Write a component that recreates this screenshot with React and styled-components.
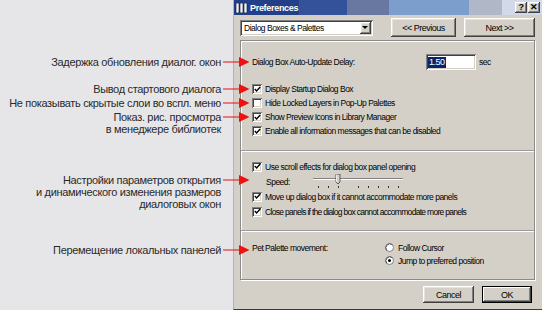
import React from "react";
import styled, { createGlobalStyle } from "styled-components";

const GlobalStyle = createGlobalStyle`
  html, body { margin: 0; padding: 0; }
  body { width: 542px; height: 310px; overflow: hidden; background: #e6e6e8; }
`;

const raised = `
  box-shadow: inset -1px -1px #404040, inset 1px 1px #ffffff,
    inset -2px -2px #808080, inset 2px 2px #e4e2dc;
`;
const sunken = `
  box-shadow: inset 1px 1px #808080, inset -1px -1px #ffffff,
    inset 2px 2px #404040, inset -2px -2px #d4d0c8;
`;

const Page = styled.div`
  display: flex;
  width: 542px;
  height: 310px;
  background: #e6e6e8;
  font-family: "Liberation Sans", Arial, sans-serif;
`;

const Notes = styled.div`
  position: relative;
  z-index: 1;
  flex: none;
  width: 250px;
  display: flex;
  flex-direction: column;
`;

const Note = styled.div`
  display: flex;
  align-items: flex-start;
  margin-top: ${(p) => p.$top}px;
`;

const NoteText = styled.div`
  width: 221px;
  text-align: right;
  font-size: 11px;
  line-height: 12px;
  color: #2a2a2a;
  letter-spacing: -0.33px;
  white-space: nowrap;
`;

const Arrow = () => (
  <svg width="29" height="12" viewBox="0 0 29 12">
    <line x1="2" y1="6" x2="20" y2="6" stroke="#e81010" strokeWidth="1" />
    <polygon points="18,1 28.5,6 18,11" fill="#ee1111" />
  </svg>
);

const Dialog = styled.div`
  margin-left: -17px;
  flex: none;
  width: 309px;
  height: 310px;
  box-sizing: border-box;
  border-left: 1px solid #b4b4b4;
  border-bottom: 1px solid #3a3a3a;
  background: #d4d0c8;
  display: flex;
  flex-direction: column;
  font-size: 8.5px;
  letter-spacing: -0.5px;
  color: #000;
`;

const TitleBar = styled.div`
  height: 15px;
  display: flex;
  align-items: center;
  padding: 0 2px 0 1px;
  background: linear-gradient(
    to right,
    #223f88 0,
    #223f88 65px,
    #33529a 65px,
    #33529a 113px,
    #6878a0 113px,
    #6878a0 155px,
    #7c9ecc 155px,
    #7c9ecc 235px,
    #b0b7c6 235px,
    #b0b7c6 268px,
    #d2daea 268px
  );
`;

const Title = styled.span`
  margin-left: 2px;
  flex: 1;
  color: #fff;
  font-weight: bold;
  font-size: 9px;
  letter-spacing: -0.3px;
`;

const CapButton = styled.div`
  width: 12px;
  height: 11px;
  background: #d4d0c8;
  ${raised}
  display: flex;
  align-items: center;
  justify-content: center;
  font-weight: bold;
  font-size: 9px;
  line-height: 1;
  color: #000;
  margin-left: ${(p) => (p.$gap ? 1 : 0)}px;
`;

const AppIcon = () => (
  <svg width="13" height="12" viewBox="0 0 13 12">
    <rect x="1" y="1" width="3" height="10" rx="1" fill="#f0f0f0" stroke="#111a40" strokeWidth="0.6" />
    <rect x="5" y="1" width="3" height="10" rx="1" fill="#f0f0f0" stroke="#111a40" strokeWidth="0.6" />
    <rect x="9" y="1" width="3" height="10" rx="1" fill="#f0f0f0" stroke="#111a40" strokeWidth="0.6" />
  </svg>
);

const Body = styled.div`
  flex: 1;
  display: flex;
  flex-direction: column;
  padding: 3px 7px 0 6px;
`;

const TopRow = styled.div`
  display: flex;
  align-items: center;
  height: 19px;
`;

const Select = styled.div`
  width: 133px;
  height: 16px;
  box-sizing: border-box;
  background: #fff;
  ${sunken}
  display: flex;
  align-items: center;
  justify-content: space-between;
  padding: 2px 2px 2px 4px;
  margin-right: 18px;
`;

const SelectArrow = styled.div`
  width: 11px;
  height: 12px;
  background: #d4d0c8;
  ${raised}
  display: flex;
  align-items: center;
  justify-content: center;
  &::after {
    content: "";
    border-left: 3px solid transparent;
    border-right: 3px solid transparent;
    border-top: 3px solid #000;
  }
`;

const Button = styled.div`
  width: ${(p) => p.$w}px;
  height: ${(p) => p.$h || 19}px;
  margin-left: ${(p) => p.$gap || 0}px;
  box-sizing: border-box;
  background: #d4d0c8;
  ${raised}
  ${(p) =>
    p.$default &&
    `box-shadow: inset 0 0 0 1px #000, inset -2px -2px #404040, inset 2px 2px #ffffff, inset -3px -3px #808080;`}
  display: flex;
  align-items: center;
  justify-content: center;
  font-size: 9px;
`;

const Panel = styled.div`
  margin-top: 3px;
  height: 240px;
  box-sizing: border-box;
  border: 1px solid #8a8a8a;
  box-shadow: 1px 1px 0 #ffffff, inset 1px 1px 0 #ffffff;
  display: flex;
  flex-direction: column;
`;

const Section = styled.div`
  height: ${(p) => p.$h}px;
  box-sizing: border-box;
  padding: ${(p) => p.$pt}px 0 0 11px;
  display: flex;
  flex-direction: column;
  ${(p) => p.$sep && `border-top: 1px solid #9a9a9e; box-shadow: inset 0 1px 0 #ffffff;`}
`;

const DelayRow = styled.div`
  display: flex;
  align-items: center;
  height: 16px;
  margin-bottom: 12px;
`;

const Label = styled.span`
  width: ${(p) => p.$w}px;
  flex: none;
  white-space: nowrap;
  padding-left: ${(p) => p.$indent || 0}px;
  box-sizing: border-box;
`;

const Field = styled.div`
  width: 50px;
  height: 16px;
  box-sizing: border-box;
  background: #fff;
  ${sunken}
  display: flex;
  align-items: center;
  padding-left: 2px;
`;

const Selected = styled.span`
  background: #0a246a;
  color: #fff;
  padding: 0 1px;
  font-size: 9px;
  line-height: 11px;
`;

const Unit = styled.span`
  margin-left: 3px;
`;

const Row = styled.div`
  display: flex;
  align-items: center;
  height: ${(p) => p.$h || 14}px;
  white-space: nowrap;
  letter-spacing: ${(p) => (p.$tight ? "-0.7px" : "inherit")};
`;

const Box = styled.span`
  width: 10px;
  height: 10px;
  flex: none;
  box-sizing: border-box;
  background: #fff;
  ${sunken}
  margin-right: 3px;
  display: flex;
  align-items: center;
  justify-content: center;
`;

const Check = ({ on }) => (
  <Box>
    {on && (
      <svg width="7" height="7" viewBox="0 0 7 7">
        <polyline points="0.8,3 2.6,5 6.2,1" fill="none" stroke="#000" strokeWidth="1.4" />
      </svg>
    )}
  </Box>
);

const Radio = ({ on }) => (
  <svg width="9" height="9" viewBox="0 0 9 9" style={{ marginRight: 4, flex: "none" }}>
    <circle cx="4.5" cy="4.5" r="4" fill="#fff" stroke="#808080" strokeWidth="1" />
    <path d="M1.7 7.3 A4 4 0 0 1 7.3 1.7" fill="none" stroke="#404040" strokeWidth="0.8" />
    {on && <circle cx="4.5" cy="4.5" r="1.5" fill="#000" />}
  </svg>
);

const Slider = () => {
  const ticks = [5, 15, 25, 45, 55, 65, 75, 85];
  return (
    <svg width="92" height="15" viewBox="0 0 92 15">
      <line x1="0" y1="4.5" x2="90" y2="4.5" stroke="#808080" strokeWidth="1" />
      <line x1="0" y1="5.5" x2="90" y2="5.5" stroke="#ffffff" strokeWidth="1" />
      <path d="M23 0 H27 V8 L25 10 L23 8 Z" fill="#d4d0c8" stroke="#404040" strokeWidth="0.8" />
      <line x1="23.5" y1="0.5" x2="23.5" y2="8" stroke="#fff" strokeWidth="0.8" />
      {ticks.map((x) => (
        <rect key={x} x={x} y="12" width="1" height="2" fill="#303030" />
      ))}
    </svg>
  );
};

const MoveRow = styled.div`
  display: flex;
`;

const Radios = styled.div`
  display: flex;
  flex-direction: column;
`;

const Footer = styled.div`
  display: flex;
  justify-content: flex-end;
  margin-top: 6px;
  padding-right: 3px;
`;

const notes = [
  { top: 56, lines: ["Задержка обновления диалог. окон"] },
  { top: 15, lines: ["Вывод стартового диалога"] },
  { top: 2, lines: ["Не показывать скрытые слои во вспл. меню"] },
  { top: 2, lines: ["Показ. рис. просмотра", "в менеджере библиотек"] },
  { top: 39, lines: ["Настройки параметров открытия", "и динамического изменения размеров", "диалоговых окон"] },
  { top: 34, lines: ["Перемещение локальных панелей"] },
];

export default function App() {
  return (
    <Page>
      <GlobalStyle />
      <Notes>
        {notes.map((n, i) => (
          <Note key={i} $top={n.top}>
            <NoteText>
              {n.lines.map((l) => (
                <div key={l}>{l}</div>
              ))}
            </NoteText>
            <Arrow />
          </Note>
        ))}
      </Notes>
      <Dialog>
        <TitleBar>
          <AppIcon />
          <Title>Preferences</Title>
          <CapButton>?</CapButton>
          <CapButton $gap>✕</CapButton>
        </TitleBar>
        <Body>
          <TopRow>
            <Select>
              <span>Dialog Boxes &amp; Palettes</span>
              <SelectArrow />
            </Select>
            <Button $w={66}>&lt;&lt; Previous</Button>
            <Button $w={71} $gap={8}>Next &gt;&gt;</Button>
          </TopRow>
          <Panel>
            <Section $h={110} $pt={13}>
              <DelayRow>
                <Label $w={174}>Dialog Box Auto-Update Delay:</Label>
                <Field>
                  <Selected>1.50</Selected>
                </Field>
                <Unit>sec</Unit>
              </DelayRow>
              <Row><Check on />Display Startup Dialog Box</Row>
              <Row><Check />Hide Locked Layers in Pop-Up Palettes</Row>
              <Row><Check on />Show Preview Icons in Library Manager</Row>
              <Row><Check on />Enable all information messages that can be disabled</Row>
            </Section>
            <Section $h={81} $pt={8} $sep>
              <Row $h={15}><Check on />Use scroll effects for dialog box panel opening</Row>
              <Row $h={15}>
                <Label $w={61} $indent={14}>Speed:</Label>
                <Slider />
              </Row>
              <Row $h={15}><Check on />Move up dialog box if it cannot accommodate more panels</Row>
              <Row $h={15} $tight><Check on />Close panels if the dialog box cannot accommodate more panels</Row>
            </Section>
            <Section $h={49} $pt={10} $sep>
              <MoveRow>
                <Row $h={13}>
                  <Label $w={133}>Pet Palette movement:</Label>
                </Row>
                <Radios>
                  <Row $h={13}><Radio />Follow Cursor</Row>
                  <Row $h={13}><Radio on />Jump to preferred position</Row>
                </Radios>
              </MoveRow>
            </Section>
          </Panel>
          <Footer>
            <Button $w={51} $h={17}>Cancel</Button>
            <Button $w={50} $h={17} $gap={8} $default>OK</Button>
          </Footer>
        </Body>
      </Dialog>
    </Page>
  );
}
